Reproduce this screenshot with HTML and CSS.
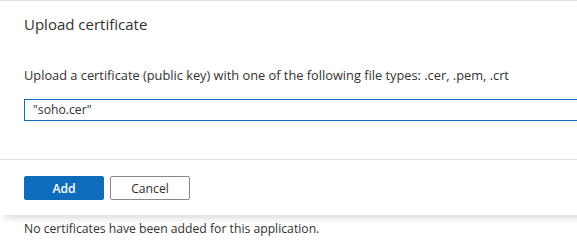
FILE: index.html
```html
<!DOCTYPE html>
<html>

<head>
  <title>Upload certificate</title>
  <link rel="stylesheet" href="styles.css">
</head>

<body>
  <div id="panel">
    <div id="panel-head">
      <span>Upload certificate</span>
    </div>
    <div id="panel-body">
      <p class="hint">Upload a certificate (public key) with one of the following file types: .cer, .pem, .crt</p>
      <div class="file-box">"soho.cer"</div>
    </div>
    <div id="panel-foot">
      <button class="btn btn-primary">Add</button>
      <button class="btn">Cancel</button>
    </div>
  </div>
  <p class="empty">No certificates have been added for this application.</p>
</body>

</html>
```

FILE: styles.css
```css
body {
  margin: 0;
  font-family: 'Open Sans', 'Noto Sans', sans-serif;
  background-color: #fff;
  color: #323130;
  overflow: hidden;
}

#panel {
  width: 620px;
  background: #fff;
  border-top: solid 1px #e1e1e1;
  box-shadow: 0 6px 8px -4px rgba(0, 0, 0, 0.18);
}

#panel-head {
  padding: 12px 24px 0;
  font-size: 15px;
  line-height: 22px;
  height: 31px;
}

#panel-body {
  padding: 22px 24px 38px;
  border-bottom: solid 1px #e1e1e1;
}

.hint {
  margin: 0 0 15px;
  font-size: 12.8px;
  line-height: 18px;
}

.file-box {
  height: 20px;
  border: solid 1px #0f6cbd;
  font-size: 12.2px;
  line-height: 20px;
  padding: 0 8px;
}

#panel-foot {
  padding: 16px 24px 15px;
  display: flex;
  gap: 6px;
}

.btn {
  width: 80px;
  height: 24px;
  font-family: inherit;
  font-size: 12.2px;
  background: #fff;
  color: #323130;
  border: solid 1px #8a8886;
  border-radius: 2px;
  padding: 0;
}

.btn-primary {
  background: #0f6cbd;
  border-color: #0f6cbd;
  color: #fff;
  font-weight: 600;
}

.empty {
  margin: 5px 24px;
  font-size: 12.2px;
  line-height: 18px;
}
```
